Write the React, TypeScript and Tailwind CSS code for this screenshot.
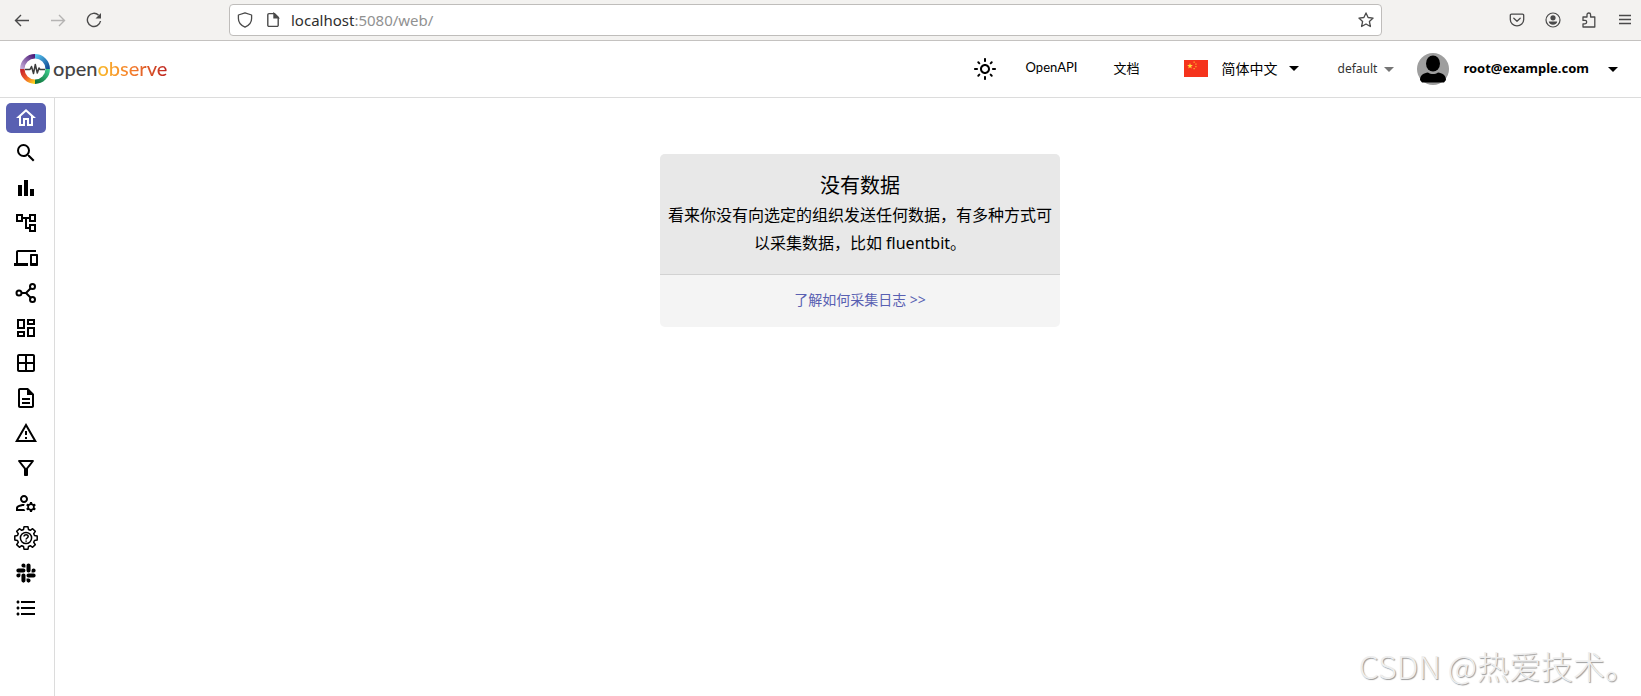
import React from 'react'
import {
    MdOutlineHome, MdSearch, MdBarChart, MdOutlineAccountTree, MdDevices, MdOutlineDashboard, MdOutlineWindow,
    MdOutlineDescription, MdOutlineWarningAmber, MdOutlineFilterAlt, MdOutlineManageAccounts, MdFormatListBulleted,
    MdOutlineLightMode, MdArrowDropDown,
} from 'react-icons/md'
import { FaSlack } from 'react-icons/fa'

const PipelineIcon = () => (
    <svg viewBox="0 0 24 24" className="size-6" fill="none" stroke="currentColor" strokeWidth="2">
        <circle cx="5" cy="12" r="2.5" />
        <circle cx="18.5" cy="5.5" r="2.5" />
        <circle cx="18.5" cy="18.5" r="2.5" />
        <path d="M7.5 12H12L16.7 7.3M12 12l4.7 4.7" />
    </svg>
)

const HelpGearIcon = () => (
    <svg viewBox="0 0 24 24" className="size-6" fill="none" stroke="currentColor" strokeWidth="1.5" strokeLinejoin="round">
        <path d="M10 .8h4l.5 2.7 1.8.8 2.3-1.6 2.7 2.7-1.6 2.3.8 1.8 2.7.5v4l-2.7.5-.8 1.8 1.6 2.3-2.7 2.7-2.3-1.6-1.8.8-.5 2.7h-4l-.5-2.7-1.8-.8-2.3 1.6-2.7-2.7 1.6-2.3-.8-1.8L.8 14v-4l2.7-.5.8-1.8-1.6-2.3 2.7-2.7 2.3 1.6 1.8-.8z" />
        <circle cx="12" cy="12" r="5.6" />
        <path d="M10 10.6c0-2.6 4.2-2.4 4.2 0 0 1.4-2.1 1.4-2.1 3M12.1 14.6v1.2" />
    </svg>
)

const menus = [
    { name: '首页', icon: <MdOutlineHome className="size-6" /> },
    { name: '日志', icon: <MdSearch className="size-6" /> },
    { name: '指标', icon: <MdBarChart className="size-6" /> },
    { name: '追踪', icon: <MdOutlineAccountTree className="size-6" /> },
    { name: 'RUM', icon: <MdDevices className="size-6" /> },
    { name: '管道', icon: <PipelineIcon /> },
    { name: '仪表板', icon: <MdOutlineDashboard className="size-6" /> },
    { name: '数据流', icon: <MdOutlineWindow className="size-6" /> },
    { name: '报告', icon: <MdOutlineDescription className="size-6" /> },
    { name: '警报', icon: <MdOutlineWarningAmber className="size-6" /> },
    { name: '采集', icon: <MdOutlineFilterAlt className="size-6" /> },
    { name: 'IAM', icon: <MdOutlineManageAccounts className="size-6" /> },
    { name: '管理', icon: <HelpGearIcon /> },
    { name: 'Slack', icon: <FaSlack className="size-[22px]" /> },
    { name: '关于', icon: <MdFormatListBulleted className="size-6" /> },
]

const BrowserBar = () => (
    <div className="flex h-[41px] items-center border-b border-[#c4c2c0] bg-[#f3f2f0] text-[#4a4a4a]">
        <div className="flex w-[229px] shrink-0 items-center gap-5 pl-[14px]">
            <button aria-label="Back">
                <svg viewBox="0 0 16 16" className="size-4" fill="none" stroke="currentColor" strokeWidth="1.4"><path d="M15 8.500H1.500M7 3L1.500 8.500 7 14" /></svg>
            </button>
            <button aria-label="Forward" className="text-[#b5b4b3]">
                <svg viewBox="0 0 16 16" className="size-4" fill="none" stroke="currentColor" strokeWidth="1.4"><path d="M1 8.500h13.500M9 3l5.500 5.500L9 14" /></svg>
            </button>
            <button aria-label="Reload">
                <svg viewBox="0 0 16 16" className="size-4" fill="none" stroke="currentColor" strokeWidth="1.4"><path d="M14.500 9A6.600 6.600 0 1 1 12.600 3.200" /><path d="M15 1v5.500H9.500z" fill="currentColor" stroke="none" /></svg>
            </button>
        </div>
        <div className="flex h-8 flex-1 items-center rounded-[4px] border border-[#bfbdbb] bg-white px-[7px]">
            <svg viewBox="0 0 16 16" className="size-4" fill="none" stroke="currentColor" strokeWidth="1.3"><path d="M8 .8L14.600 3v3.500c0 4-2.700 7-6.600 8.700C4.100 13.500 1.400 10.500 1.400 6.500V3z" strokeLinejoin="round" /></svg>
            <svg viewBox="0 0 16 16" className="ml-3 size-4" fill="none" stroke="currentColor" strokeWidth="1.4"><path d="M9.500 1.600H4a1.200 1.200 0 0 0-1.200 1.200v10.400A1.200 1.200 0 0 0 4 14.400h8a1.200 1.200 0 0 0 1.200-1.200V5.300z" /><path d="M9 1.500v4.300h4.300z" fill="currentColor" /></svg>
            <div className="ml-[10px] flex-1 font-['Noto_Sans',sans-serif] text-[15px] text-[#919191]"><span className="text-[#2e2e2e]">localhost</span>:5080/web/</div>
            <button aria-label="Bookmark">
                <svg viewBox="0 0 16 16" className="size-4" fill="none" stroke="currentColor" strokeWidth="1.3" strokeLinejoin="round"><path d="M8 .9l2.100 4.600 5 .6-3.700 3.400 1 5L8 12l-4.400 2.500 1-5L.9 6.100l5-.6z" /></svg>
            </button>
        </div>
        <div className="flex w-[259px] shrink-0 items-center justify-end gap-5 pr-2">
            <button aria-label="Pocket">
                <svg viewBox="0 0 16 16" className="size-4" fill="none" stroke="currentColor" strokeWidth="1.3" strokeLinecap="round" strokeLinejoin="round"><path d="M2.500 2.200h11a1.200 1.200 0 0 1 1.200 1.200v4.200a6.700 6.300 0 0 1-13.400 0V3.400a1.200 1.200 0 0 1 1.200-1.200z" /><path d="M4.800 6.300L8 9.300l3.200-3" /></svg>
            </button>
            <button aria-label="Account">
                <svg viewBox="0 0 16 16" className="size-4" fill="none" stroke="currentColor" strokeWidth="1.2"><circle cx="8" cy="8" r="7" /><circle cx="8" cy="5.800" r="2.600" fill="currentColor" stroke="none" /><path d="M3.800 9.600h8.400c0 1.900-1.800 3.200-4.200 3.200s-4.200-1.300-4.200-3.200z" fill="currentColor" stroke="none" /></svg>
            </button>
            <button aria-label="Extensions">
                <svg viewBox="0 0 16 16" className="size-4" fill="none" stroke="currentColor" strokeWidth="1.3" strokeLinejoin="round"><path d="M2 5h4V2.800a1.800 1.800 0 0 1 3.600 0V5h4.200v10H2v-3.200h2a1.700 1.700 0 0 0 0-3.400H2z" /></svg>
            </button>
            <button aria-label="Menu">
                <svg viewBox="0 0 16 16" className="size-4" stroke="currentColor" strokeWidth="1.3"><path d="M2 3.500h12M2 7.500h12M2 11.500h12" /></svg>
            </button>
        </div>
    </div>
)

const Logo = () => (
    <a href="#" aria-label="openobserve" className="flex items-center gap-[3px]">
        <svg viewBox="0 0 30 30" className="size-[30px]" fill="none" strokeWidth="4.500">
            <defs>
                <linearGradient id="violet" x1="0" y1="1" x2="1" y2="0"><stop stopColor="#c3a8d6" /><stop offset="1" stopColor="#4b1a78" /></linearGradient>
                <linearGradient id="blue" x1="0" y1="0" x2="1" y2="1"><stop stopColor="#59c4ee" /><stop offset="1" stopColor="#0f4c95" /></linearGradient>
                <linearGradient id="green" x1="1" y1="0" x2="0" y2="1"><stop stopColor="#3cc98a" /><stop offset="1" stopColor="#0d7038" /></linearGradient>
                <linearGradient id="flame" x1="0" y1="0" x2="1" y2="1"><stop stopColor="#c5212b" /><stop offset=".5" stopColor="#ee5a29" /><stop offset="1" stopColor="#fdd01c" /></linearGradient>
            </defs>
            <path d="M2.300 15A12.700 12.700 0 0 1 15 2.300" stroke="url(#violet)" />
            <path d="M15 2.300A12.700 12.700 0 0 1 27.700 15" stroke="url(#blue)" />
            <path d="M27.700 15A12.700 12.700 0 0 1 15 27.700" stroke="url(#green)" />
            <path d="M15 27.700A12.700 12.700 0 0 1 2.300 15" stroke="url(#flame)" />
            <path d="M5 15.500h5l1.500-3 2 7 1.800-9 2 8.500 1.700-5 1 1.500h5" stroke="#3d3d3d" strokeWidth="1.500" strokeLinejoin="round" />
        </svg>
        <span className="pb-[2px] font-['Lato',sans-serif] text-[20px] leading-6 font-medium text-[#444]">open<span className="bg-linear-to-r from-[#f9bd2b] via-[#f47c2c] to-[#bd2222] bg-clip-text text-transparent">observe</span></span>
    </a>
)

const Header = () => (
    <header className="flex h-[57px] items-center border-b border-[#dcdcdc] pl-5 pr-4">
        <Logo />
        <div className="flex-1" />
        <button aria-label="Theme"><MdOutlineLightMode className="size-6" /></button>
        <a href="#" className="ml-[29px] pb-[2px] font-['Lato',sans-serif] text-[13px]">OpenAPI</a>
        <a href="#" className="ml-9 text-[13px]">文档</a>
        <button className="ml-11 flex items-center pb-[2px] text-[14px]">
            <svg viewBox="0 0 24 17" className="mr-[14px] h-[17px] w-6">
                <path fill="#f5331c" d="M0 0h24v17H0z" />
                <path fill="#ffde3b" d="M6 3l.7 2.100h2.200L7.100 6.400l.7 2.100L6 7.200 4.200 8.500l.7-2.100-1.800-1.300h2.200z" />
                <path fill="#ffb02e" d="M9.500 1.500h1.300v1.200H9.500zM11.300 3.500h1.200v1.300h-1.200zM11.300 6h1.200v1.300h-1.200zM9.500 8h1.300v1.200H9.500z" />
            </svg>
            简体中文
            <MdArrowDropDown className="ml-1 size-6" />
        </button>
        <button className="ml-8 flex items-center text-[12px] text-[#333]">
            default
            <MdArrowDropDown className="size-6 text-[#757575]" />
        </button>
        <button className="ml-4 flex items-center text-[13px] font-bold">
            <svg viewBox="0 0 32 32" className="mr-[14px] size-8">
                <circle cx="16" cy="16" r="16" fill="#9e9e9e" />
                <ellipse cx="16" cy="10.500" rx="7" ry="8" />
                <path d="M3 27c0-5 4-7 8-7.500 3 2 7 2 10 0 4 .5 8 2.500 8 7.500l-2 2.500H5z" />
            </svg>
            root@example.com
            <MdArrowDropDown className="ml-3 size-6" />
        </button>
    </header>
)

const Sidebar = () => (
    <nav className="flex w-[55px] shrink-0 flex-col gap-[5px] border-r border-[#dcdcdc] py-[5px] pl-[6px]">
        {menus.map((menu, index) => (
            <a key={menu.name} href="#" aria-label={menu.name} className={`flex h-[30px] w-10 items-center justify-center rounded-[5px] ${index === 0 ? 'bg-[#5960b2] text-white' : 'text-black'}`}>
                {menu.icon}
            </a>
        ))}
    </nav>
)

const App = () => {
    return (
        <div className="relative flex min-h-screen flex-col bg-white font-['Noto_Sans','Noto_Sans_CJK_SC',sans-serif] text-black">
            <BrowserBar />
            <Header />
            <div className="flex flex-1">
                <Sidebar />
                <main className="flex flex-1 items-start justify-center pl-6 pt-14">
                    <div className="w-[400px] overflow-hidden rounded-[5px] bg-[#f4f4f4] text-center">
                        <div className="border-b border-[#d2d2d2] bg-[#e8e8e8] px-1 py-[17px]">
                            <h1 className="text-[20px] leading-[30px]">没有数据</h1>
                            <p className="text-[16px] leading-7">看来你没有向选定的组织发送任何数据，有多种方式可以采集数据，比如 fluentbit。</p>
                        </div>
                        <a href="#" className="block pt-[15px] pb-[17px] text-[14px] leading-5 text-[#5960b2]">了解如何采集日志 &gt;&gt;</a>
                    </div>
                </main>
            </div>
            <div className="absolute bottom-2 right-1 font-['Noto_Sans_CJK_SC',sans-serif] text-[32px] leading-[46px] font-light text-[#eee] [text-shadow:1px_1px_1px_#999]">CSDN @热爱技术。</div>
        </div>
    )
}

export default App
